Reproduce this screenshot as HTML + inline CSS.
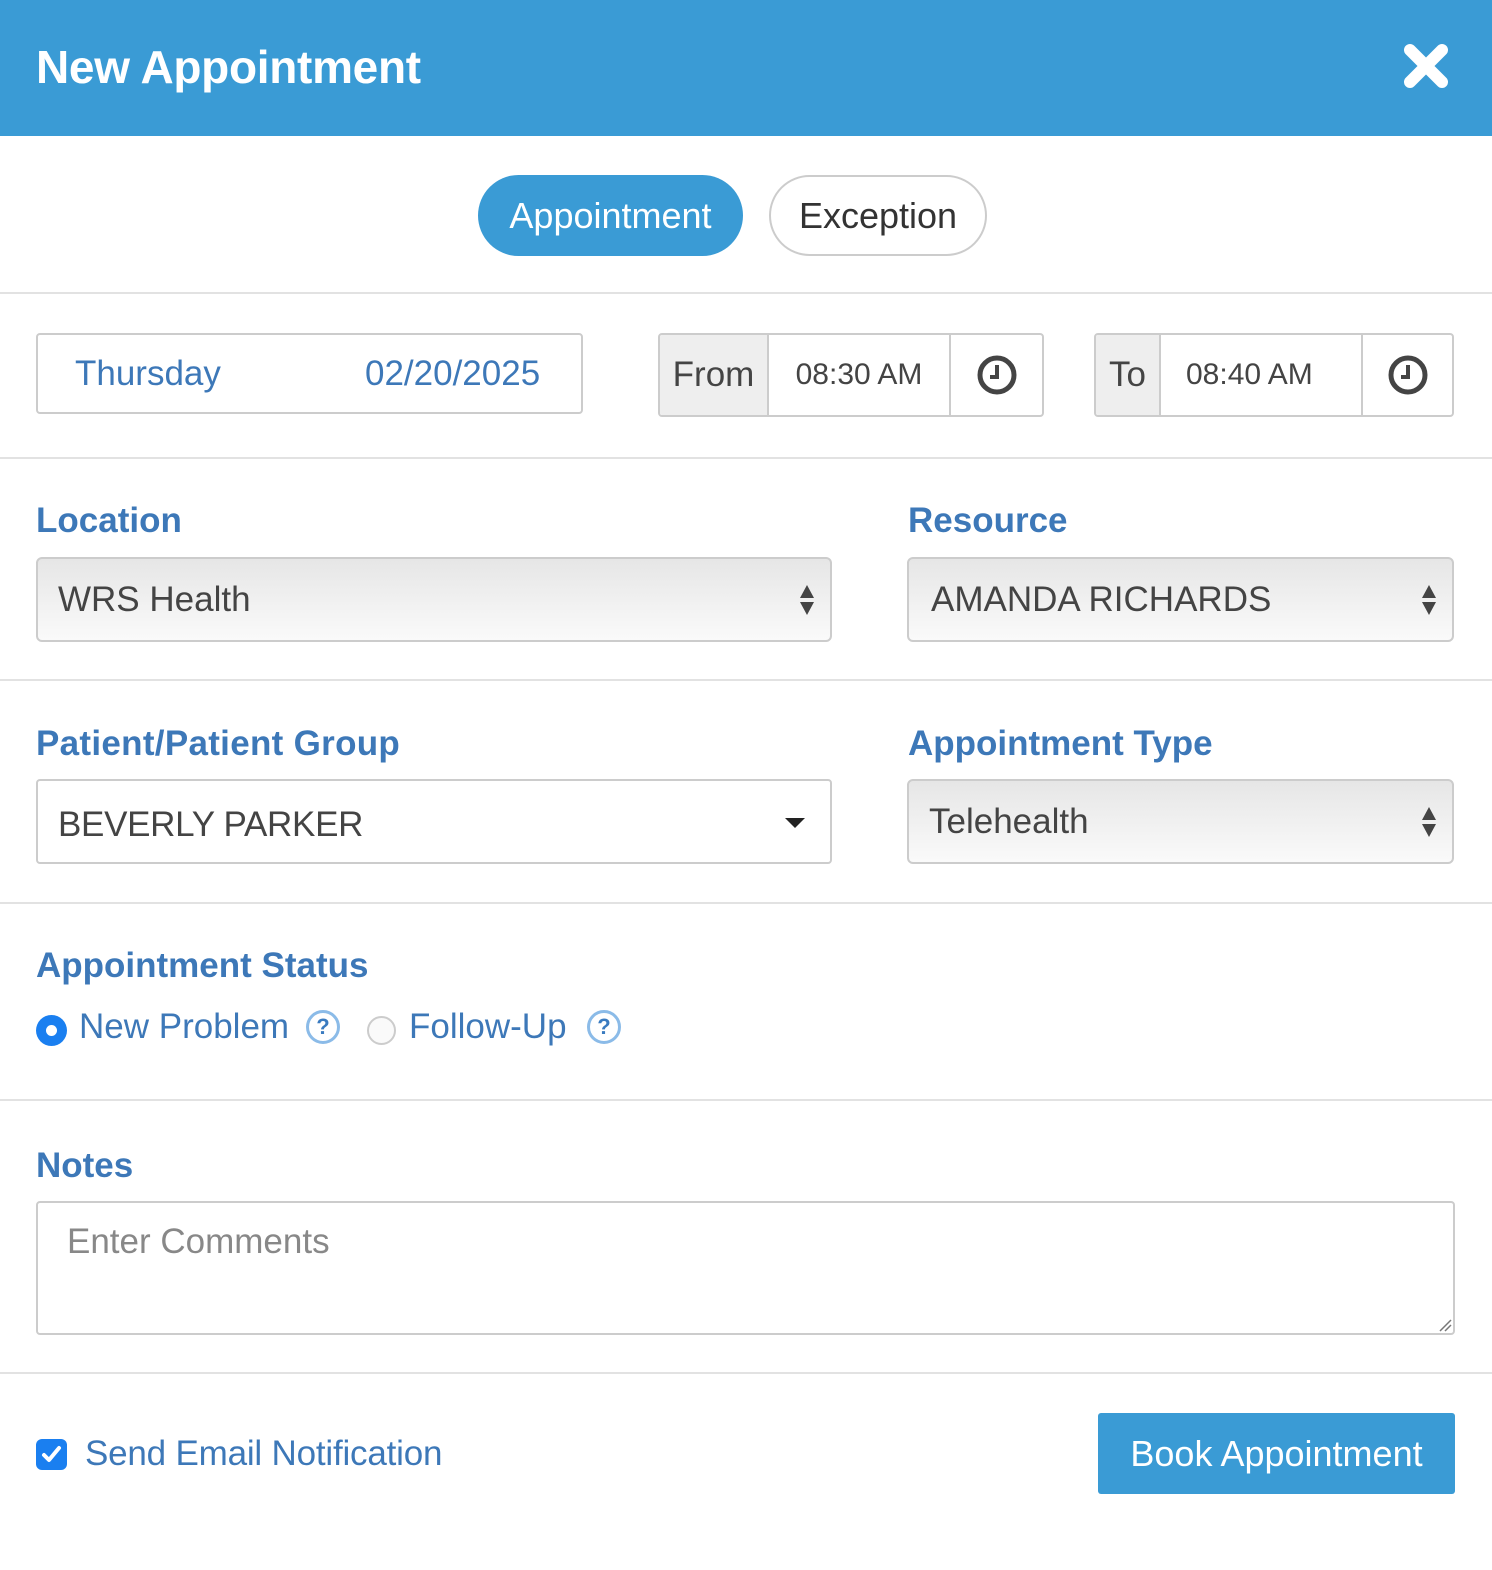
<!DOCTYPE html>
<html><head><meta charset="utf-8"><style>
*{box-sizing:border-box;margin:0;padding:0}
body{width:1492px;height:1570px;background:#fff;font-family:"Liberation Sans",Arial,sans-serif;position:relative;overflow:hidden}
.a{position:absolute}
.hdr{left:0;top:0;width:1492px;height:136px;background:#3a9bd5}
.title{left:36px;top:40px;color:#fff;font-weight:bold;font-size:46px;letter-spacing:-0.3px}
.line{left:0;width:1492px;height:2px;background:#e2e2e2}
.lbl{color:#3d78b8;font-weight:bold;font-size:35px;letter-spacing:0}
.box{border:2px solid #ccc;border-radius:4px;background:#fff}
.sel{border:2px solid #ccc;border-radius:6px;background:linear-gradient(#e6e6e6,#fafafa);font-size:35px;color:#444;padding-left:20px;display:flex;align-items:center}
.arr{position:absolute;right:14px;top:24px;width:18px;height:34px}
.cell{position:absolute;top:0;height:100%;display:flex;align-items:center;justify-content:center;font-size:30px;color:#444}
</style></head><body>
<div class="a hdr"></div>
<div class="a title">New Appointment</div>
<svg class="a" style="left:1402px;top:42px" width="48" height="48" viewBox="0 0 48 48"><path d="M8 8L40 40M40 8L8 40" stroke="#fff" stroke-width="12" stroke-linecap="round"/></svg>

<div class="a" style="left:478px;top:175px;width:265px;height:81px;border-radius:41px;background:#3a9bd5;color:#fff;font-size:36px;display:flex;align-items:center;justify-content:center">Appointment</div>
<div class="a" style="left:769px;top:175px;width:218px;height:81px;border-radius:41px;border:2px solid #ccc;color:#333;font-size:36px;display:flex;align-items:center;justify-content:center">Exception</div>
<div class="a line" style="top:292px"></div>

<div class="a box" style="left:36px;top:333px;width:547px;height:81px"></div>
<div class="a" style="left:75px;top:354px;font-size:35px;color:#3d78b8">Thursday</div>
<div class="a" style="left:365px;top:354px;font-size:35px;color:#3d78b8">02/20/2025</div>

<div class="a box" style="left:658px;top:333px;width:386px;height:84px;overflow:hidden">
 <div class="cell" style="left:0;width:109px;background:#eee;border-right:2px solid #ccc;font-size:35px">From</div>
 <div class="cell" style="left:109px;width:182px;border-right:2px solid #ccc">08:30 AM</div>
 <div class="cell" style="left:291px;width:91px"><svg width="42" height="42" viewBox="0 0 42 42"><circle cx="21" cy="21" r="17" fill="none" stroke="#444" stroke-width="5"/><path d="M21 11V23H14" fill="none" stroke="#444" stroke-width="4"/></svg></div>
</div>
<div class="a box" style="left:1094px;top:333px;width:360px;height:84px;overflow:hidden">
 <div class="cell" style="left:0;width:65px;background:#eee;border-right:2px solid #ccc;font-size:35px">To</div>
 <div class="cell" style="left:65px;width:202px;border-right:2px solid #ccc;justify-content:flex-start;padding-left:25px">08:40 AM</div>
 <div class="cell" style="left:267px;width:89px"><svg width="42" height="42" viewBox="0 0 42 42"><circle cx="21" cy="21" r="17" fill="none" stroke="#444" stroke-width="5"/><path d="M21 11V23H14" fill="none" stroke="#444" stroke-width="4"/></svg></div>
</div>
<div class="a line" style="top:457px"></div>

<div class="a lbl" style="left:36px;top:501px">Location</div>
<div class="a lbl" style="left:908px;top:501px">Resource</div>
<div class="a sel" style="left:36px;top:557px;width:796px;height:85px">WRS Health<svg class="arr" viewBox="0 0 18 34"><path d="M9 2L16 15H2ZM9 32L16 19H2Z" fill="#444"/></svg></div>
<div class="a sel" style="left:907px;top:557px;width:547px;height:85px;padding-left:22px">AMANDA RICHARDS<svg class="arr" viewBox="0 0 18 34"><path d="M9 2L16 15H2ZM9 32L16 19H2Z" fill="#444"/></svg></div>
<div class="a line" style="top:679px"></div>

<div class="a lbl" style="left:36px;top:724px;letter-spacing:0.3px">Patient/Patient Group</div>
<div class="a lbl" style="left:908px;top:724px">Appointment Type</div>
<div class="a box" style="left:36px;top:779px;width:796px;height:85px;font-size:35px;color:#444;padding-left:20px;display:flex;align-items:center;padding-top:6px;letter-spacing:-0.3px">BEVERLY PARKER<svg class="a" style="left:746px;top:36px" width="22" height="12" viewBox="0 0 22 12"><path d="M1 1H21L11 11Z" fill="#222"/></svg></div>
<div class="a sel" style="left:907px;top:779px;width:547px;height:85px">Telehealth<svg class="arr" viewBox="0 0 18 34"><path d="M9 2L16 15H2ZM9 32L16 19H2Z" fill="#444"/></svg></div>
<div class="a line" style="top:902px"></div>

<div class="a lbl" style="left:36px;top:946px">Appointment Status</div>
<div class="a" style="left:36px;top:1015px;width:31px;height:31px;border-radius:50%;background:#1a7ff0"><div class="a" style="left:10px;top:10px;width:11px;height:11px;border-radius:50%;background:#fff"></div></div>
<div class="a" style="left:79px;top:1007px;font-size:35px;color:#3d78b8">New Problem</div>
<div class="a" style="left:306px;top:1010px;width:34px;height:34px;border-radius:50%;border:3px solid #8bbbe8;color:#3a7bc0;font-size:22px;font-weight:bold;text-align:center;line-height:28px">?</div>
<div class="a" style="left:367px;top:1016px;width:29px;height:29px;border-radius:50%;border:2px solid #ccc;background:#fafafa"></div>
<div class="a" style="left:409px;top:1007px;font-size:35px;color:#3d78b8">Follow-Up</div>
<div class="a" style="left:587px;top:1010px;width:34px;height:34px;border-radius:50%;border:3px solid #8bbbe8;color:#3a7bc0;font-size:22px;font-weight:bold;text-align:center;line-height:28px">?</div>
<div class="a line" style="top:1099px"></div>

<div class="a lbl" style="left:36px;top:1146px">Notes</div>
<div class="a box" style="left:36px;top:1201px;width:1419px;height:134px"></div>
<div class="a" style="left:67px;top:1222px;font-size:35px;color:#888">Enter Comments</div>
<svg class="a" style="left:1438px;top:1318px" width="14" height="14"><path d="M2 13L13 2M7 13L13 7" stroke="#777" stroke-width="1.5"/></svg>
<div class="a line" style="top:1372px"></div>

<div class="a" style="left:36px;top:1439px;width:31px;height:31px;border-radius:6px;background:#1a7ff0"><svg width="31" height="31" viewBox="0 0 31 31"><path d="M8 16L13 21L23 9" fill="none" stroke="#fff" stroke-width="4" stroke-linecap="round" stroke-linejoin="round"/></svg></div>
<div class="a" style="left:85px;top:1434px;font-size:35px;color:#3d78b8;letter-spacing:-0.2px">Send Email Notification</div>
<div class="a" style="left:1098px;top:1413px;width:357px;height:81px;background:#3a9bd5;border-radius:3px;color:#fff;font-size:36px;display:flex;align-items:center;justify-content:center">Book Appointment</div>
</body></html>
